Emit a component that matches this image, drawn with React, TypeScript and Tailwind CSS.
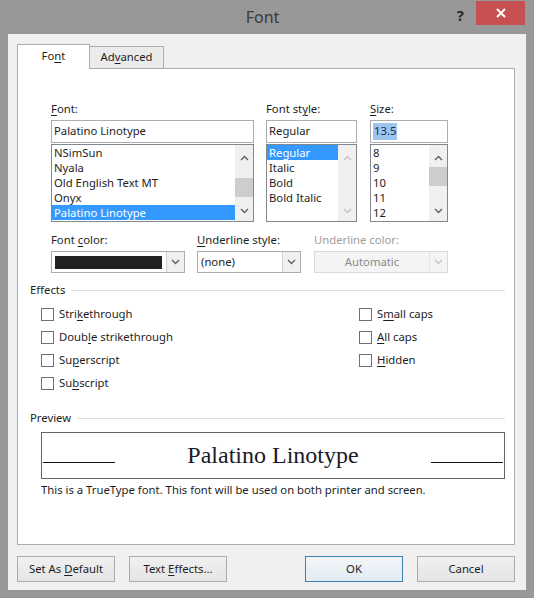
import React from 'react';

function U({ children }: { children: React.ReactNode }) {
  return <span className="underline decoration-1 underline-offset-2">{children}</span>;
}

function Chevron({ dir, color }: { dir: 'up' | 'down'; color: string }) {
  return (
    <svg width="9" height="6" viewBox="0 0 9 6">
      <path
        d={dir === 'up' ? 'M1 5 L4.5 1.5 L8 5' : 'M1 1 L4.5 4.5 L8 1'}
        stroke={color}
        strokeWidth="1.4"
        fill="none"
      />
    </svg>
  );
}

function ScrollBar({ thumb, disabled }: { thumb?: string; disabled?: boolean }) {
  const c = disabled ? '#c4c4c4' : '#606060';
  return (
    <div className="w-[18px] flex flex-col bg-[#f0f0f0]">
      <div className="h-[22px] flex items-center justify-center pt-[3px]">
        <Chevron dir="up" color={c} />
      </div>
      <div className="flex-1">{thumb && <div className={thumb + ' bg-[#cdcdcd]'} />}</div>
      <div className="h-[20px] flex items-center justify-center">
        <Chevron dir="down" color={c} />
      </div>
    </div>
  );
}

function ListBox({
  items,
  selected,
  thumb,
  disabled,
}: {
  items: string[];
  selected: number;
  thumb?: string;
  disabled?: boolean;
}) {
  return (
    <div className="h-[78px] border border-[#828790] bg-white flex">
      <div className="flex-1 overflow-hidden">
        {items.map((it, i) => (
          <div
            key={it}
            className={
              'h-[15px] leading-[15px] pl-[2px] whitespace-nowrap overflow-hidden ' +
              (i === selected ? 'bg-[#3399ff] text-white' : '')
            }
          >
            {it}
          </div>
        ))}
      </div>
      <ScrollBar thumb={thumb} disabled={disabled} />
    </div>
  );
}

function TextBox({ children }: { children: React.ReactNode }) {
  return (
    <div className="h-[23px] border border-[#abadb3] bg-white flex items-center pl-[2px] mb-[1px]">
      {children}
    </div>
  );
}

function Combo({
  children,
  width,
  disabled,
}: {
  children: React.ReactNode;
  width: string;
  disabled?: boolean;
}) {
  return (
    <div
      className={
        width +
        ' h-[22px] flex border ' +
        (disabled ? 'border-[#d9d9d9] bg-[#f4f4f4]' : 'border-[#abadb3] bg-white')
      }
    >
      <div className="flex-1 flex items-center min-w-0">{children}</div>
      <div
        className={
          'w-[18px] flex items-center justify-center border-l ' +
          (disabled ? 'border-[#e3e3e3]' : 'border-[#d0d0d0] bg-[#f0f0f0]')
        }
      >
        <Chevron dir="down" color={disabled ? '#c4c4c4' : '#606060'} />
      </div>
    </div>
  );
}

function Check({ children }: { children: React.ReactNode }) {
  return (
    <div className="h-[23px] flex items-center gap-[5px]">
      <div className="w-[13px] h-[13px] border border-[#707070] bg-white" />
      <span>{children}</span>
    </div>
  );
}

function Group({ title }: { title: string }) {
  return (
    <div className="flex items-center h-[16px] gap-[6px]">
      <span className="leading-[16px]">{title}</span>
      <div className="flex-1 h-px bg-[#dcdcdc]" />
    </div>
  );
}

function Btn({ children, primary }: { children: React.ReactNode; primary?: boolean }) {
  return (
    <div
      className={
        'w-[98px] h-[26px] flex items-center justify-center border ' +
        (primary
          ? 'border-[#3c7fb1] bg-gradient-to-b from-[#f2f6fa] to-[#e3ebf3]'
          : 'border-[#acacac] bg-gradient-to-b from-[#f0f0f0] to-[#e5e5e5]')
      }
    >
      <span>{children}</span>
    </div>
  );
}

export default function App() {
  return (
    <div className="w-[534px] h-[598px] bg-[#989898] flex flex-col font-['Noto_Sans','Liberation_Sans',sans-serif] text-[11.3px] text-[#1e1e1e] select-none">
      {/* title bar */}
      <div className="h-[34px] flex">
        <div className="flex-1" />
        <div className="flex items-center text-[16px] text-[#3a3a3a] pb-[1px]">Font</div>
        <div className="flex-1 flex justify-end items-start pr-[9px]">
          <div className="text-[15px] font-bold text-[#2a2a2a] mt-[4px] mr-[12px]">?</div>
          <div className="w-[49px] h-[24px] mt-[1px] bg-[#c75050] flex items-center justify-center">
            <svg width="10" height="10" viewBox="0 0 10 10">
              <path d="M1 1 L9 9 M9 1 L1 9" stroke="#fff" strokeWidth="2" />
            </svg>
          </div>
        </div>
      </div>

      {/* client area */}
      <div className="flex-1 mx-[8px] mb-[8px] bg-[#f0f0f0] pt-[10px] pl-[9px] flex flex-col">
        {/* tabs */}
        <div className="flex items-end h-[24px]">
          <div className="w-[73px] h-[25px] -mb-px relative z-10 bg-white border border-b-0 border-[#adadad] flex items-center justify-center pb-[1px]">
            <span>
              Fo<U>n</U>t
            </span>
          </div>
          <div className="w-[74px] h-[22px] bg-[#ebebeb] border border-l-0 border-b-0 border-[#adadad] flex items-center justify-center">
            <span>
              Ad<U>v</U>anced
            </span>
          </div>
        </div>

        {/* panel */}
        <div className="w-[498px] h-[477px] border border-[#adadad] bg-white flex flex-col">
          {/* font pickers */}
          <div className="pl-[33px] pt-[32px] flex gap-[12px]">
            <div className="w-[203px] flex flex-col">
              <div className="h-[16px] leading-[16px] mb-[3px]">
                <U>F</U>ont:
              </div>
              <TextBox>Palatino Linotype</TextBox>
              <ListBox
                items={['NSimSun', 'Nyala', 'Old English Text MT', 'Onyx', 'Palatino Linotype']}
                selected={4}
                thumb="mt-[11px] h-[19px]"
              />
            </div>
            <div className="w-[91px] flex flex-col">
              <div className="h-[16px] leading-[16px] mb-[3px]">
                Font st<U>y</U>le:
              </div>
              <TextBox>Regular</TextBox>
              <ListBox items={['Regular', 'Italic', 'Bold', 'Bold Italic']} selected={0} disabled />
            </div>
            <div className="w-[78px] flex flex-col ml-[1px]">
              <div className="h-[16px] leading-[16px] mb-[3px]">
                <U>S</U>ize:
              </div>
              <TextBox>
                <span className="bg-[#9cc4ec] text-[#10305a] px-[1px]">13.5</span>
              </TextBox>
              <ListBox items={['8', '9', '10', '11', '12']} selected={-1} thumb="mt-[0px] h-[19px]" />
            </div>
          </div>

          {/* color / underline */}
          <div className="pl-[33px] mt-[10px] flex gap-[12px]">
            <div className="flex flex-col">
              <div className="h-[16px] leading-[16px] mb-[3px]">
                Font <U>c</U>olor:
              </div>
              <Combo width="w-[134px]">
                <div className="ml-[3px] w-[107px] h-[13px] bg-[#222222]" />
              </Combo>
            </div>
            <div className="flex flex-col">
              <div className="h-[16px] leading-[16px] mb-[3px]">
                <U>U</U>nderline style:
              </div>
              <Combo width="w-[104px]">
                <span className="pl-[3px]">(none)</span>
              </Combo>
            </div>
            <div className="flex flex-col ml-[1px]">
              <div className="h-[16px] leading-[16px] mb-[3px] text-[#9d9d9d]">Underline color:</div>
              <Combo width="w-[134px]" disabled>
                <span className="flex-1 text-center text-[#8a8a8a]">Automatic</span>
              </Combo>
            </div>
          </div>

          {/* effects */}
          <div className="pl-[12px] pr-[9px] mt-[9px]">
            <Group title="Effects" />
            <div className="pl-[11px] mt-[5px] flex">
              <div className="w-[318px] flex flex-col">
                <Check>
                  Stri<U>k</U>ethrough
                </Check>
                <Check>
                  Doub<U>l</U>e strikethrough
                </Check>
                <Check>
                  Su<U>p</U>erscript
                </Check>
                <Check>
                  Su<U>b</U>script
                </Check>
              </div>
              <div className="flex flex-col">
                <Check>
                  S<U>m</U>all caps
                </Check>
                <Check>
                  <U>A</U>ll caps
                </Check>
                <Check>
                  <U>H</U>idden
                </Check>
              </div>
            </div>
          </div>

          {/* preview */}
          <div className="pl-[12px] pr-[9px] mt-[15px]">
            <Group title="Preview" />
            <div className="ml-[11px] mt-[6px] h-[47px] border border-[#646464] flex items-center justify-between px-[1px]">
              <div className="w-[72px] h-px bg-[#111] mt-[14px]" />
              <span className="font-['Liberation_Serif',serif] text-[24px] text-[#1a1a2a] pb-[1px]">Palatino Linotype</span>
              <div className="w-[72px] h-px bg-[#111] mt-[14px]" />
            </div>
            <div className="ml-[11px] mt-[3px] leading-[16px]">
              This is a TrueType font. This font will be used on both printer and screen.
            </div>
          </div>
        </div>

        {/* buttons */}
        <div className="mt-[11px] flex w-[498px]">
          <Btn>
            Set As <U>D</U>efault
          </Btn>
          <div className="ml-[14px]">
            <Btn>
              Text <U>E</U>ffects...
            </Btn>
          </div>
          <div className="flex-1" />
          <Btn primary>OK</Btn>
          <div className="ml-[14px]">
            <Btn>Cancel</Btn>
          </div>
        </div>
      </div>
    </div>
  );
}
